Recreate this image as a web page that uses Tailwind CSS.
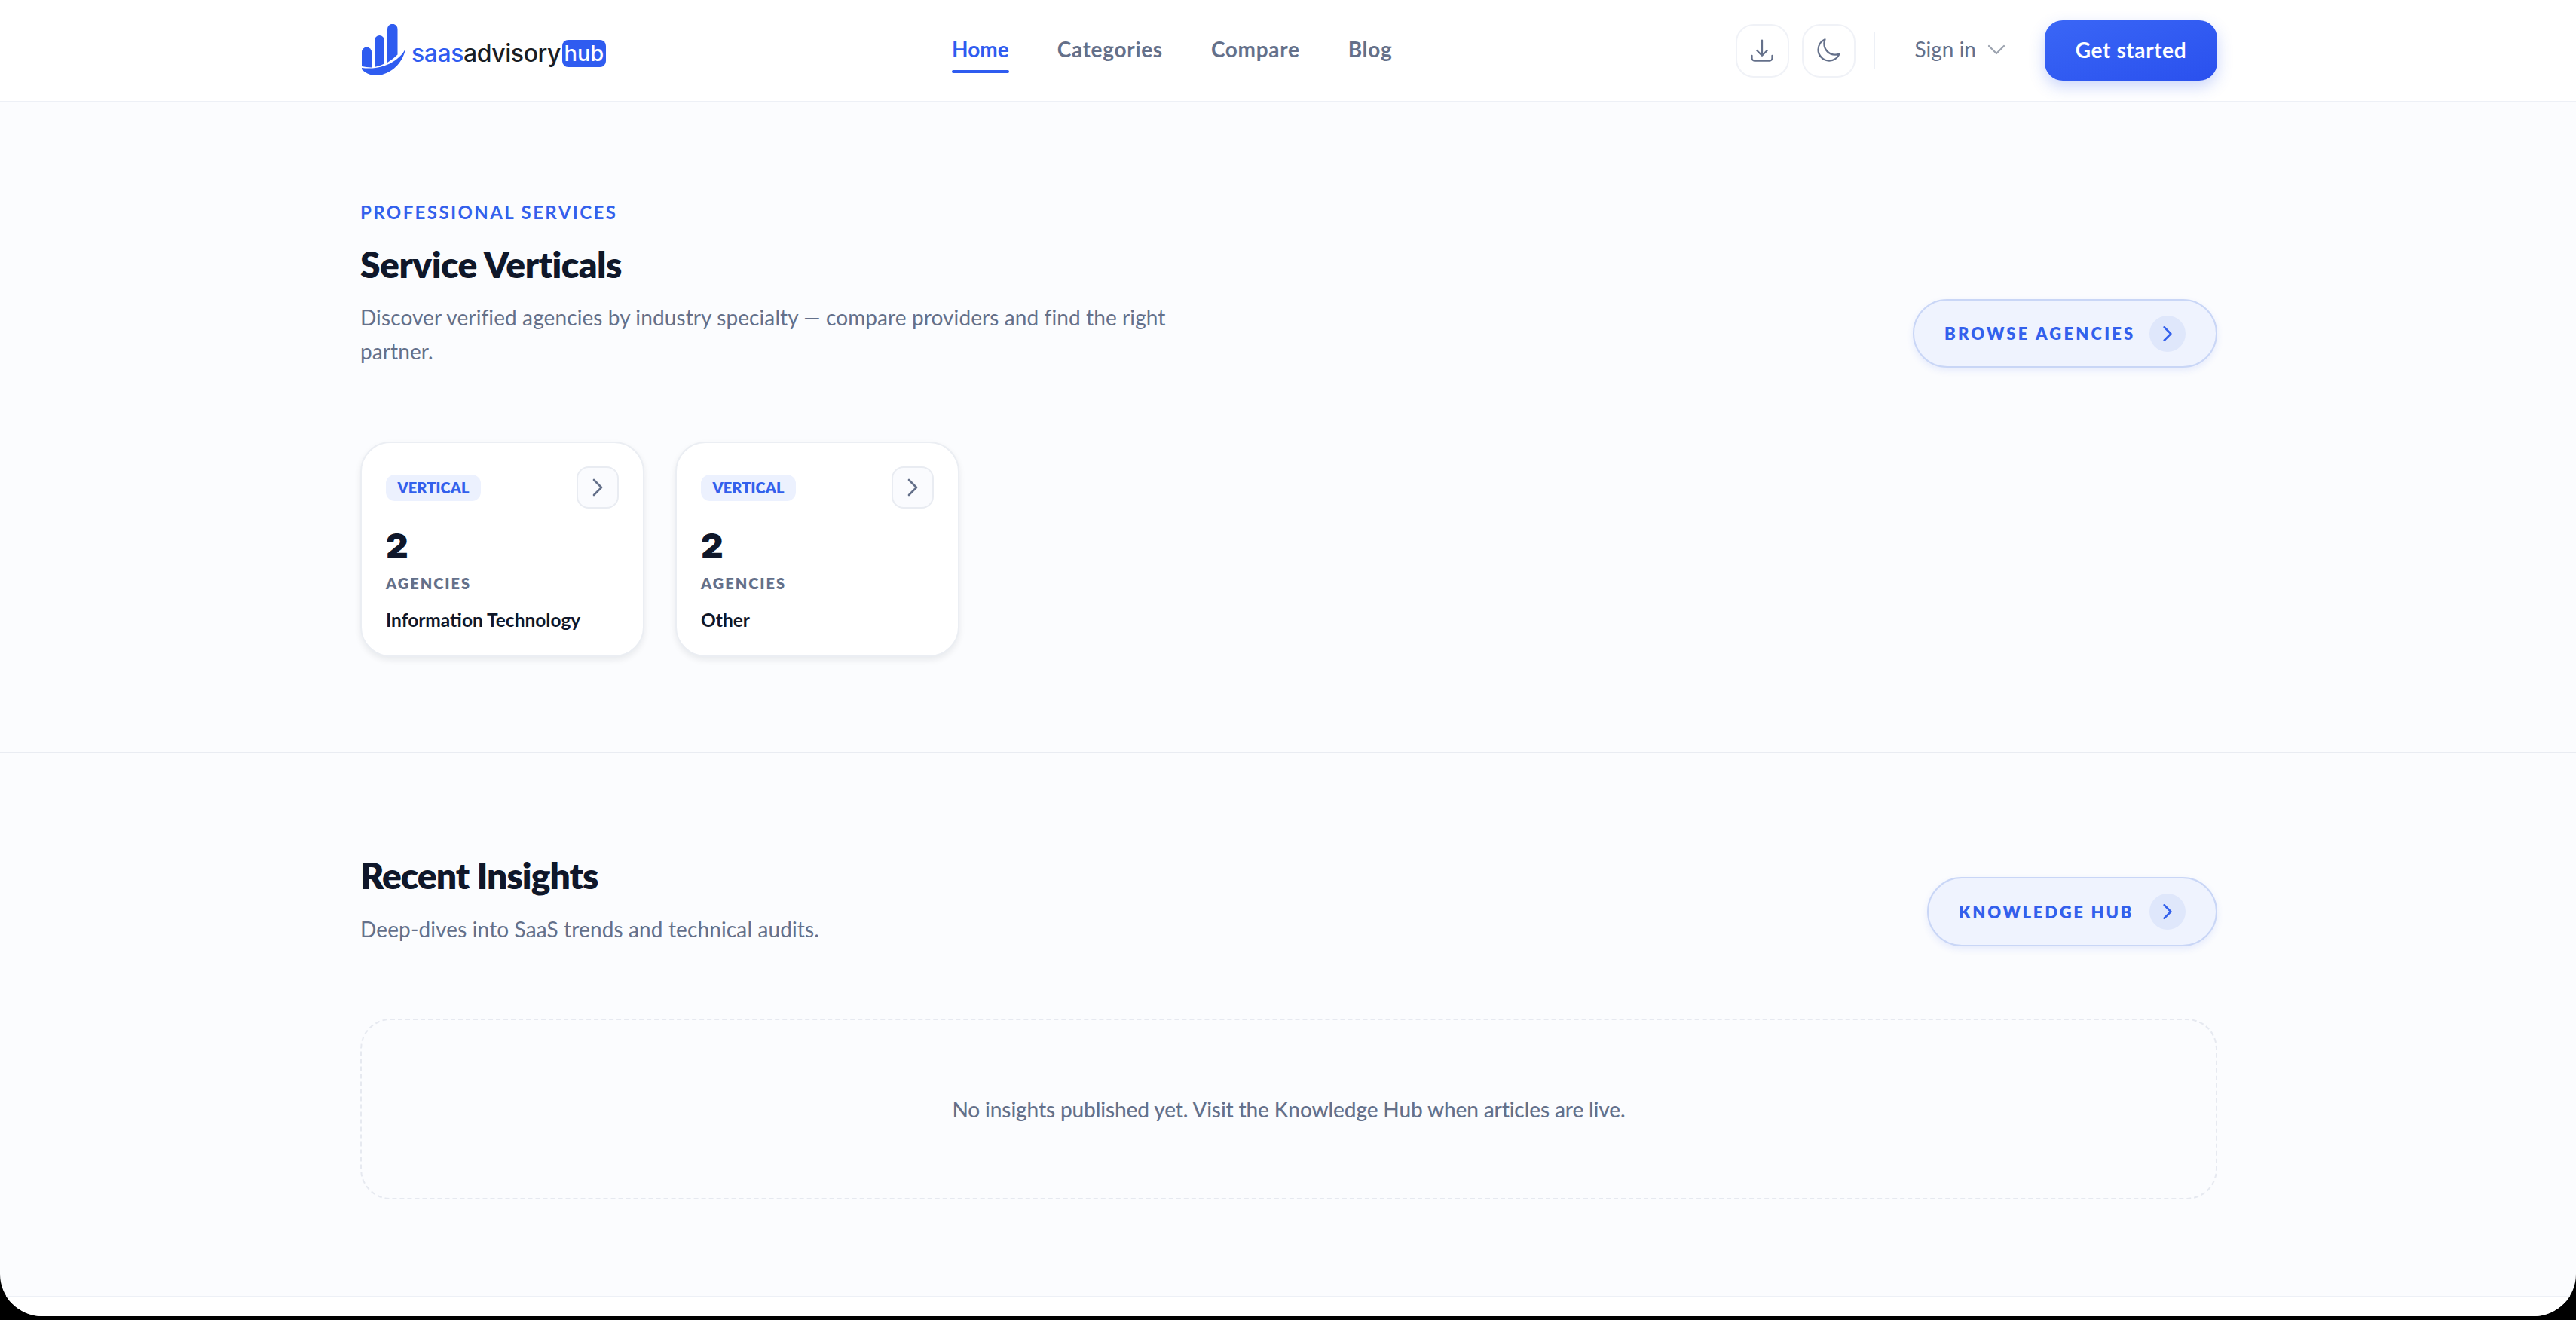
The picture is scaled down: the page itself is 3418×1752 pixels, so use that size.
<!DOCTYPE html>
<html lang="en">
<head>
  <meta charset="UTF-8" />
  <title>SaaS Advisory Hub</title>
  <script src="https://cdn.jsdelivr.net/npm/@tailwindcss/browser@4"></script>
</head>
<body class="bg-black font-['Lato',sans-serif] text-[#0f172a]">
  <div class="h-[1747px] overflow-hidden rounded-b-[56px] bg-[#fbfcfe]">

    <!-- Header -->
    <header class="h-[136px] border-b-2 border-[#edf0f6] bg-white">
      <div class="ml-[478px] flex h-[134px] w-[2464px] items-center justify-between">
        <a class="flex items-center pl-[2px]">
          <svg class="h-[68px] w-[58px] -translate-y-[1px]" viewBox="0 0 58 68" fill="#2f5cf0">
            <path d="M0 37a6.500 6.500 0 0 1 13 0v20.500q-7-.5-13-1.500Z"/>
            <path d="M17 21.500a6.500 6.500 0 0 1 13 0v31q-6 3-13 4.500Z"/>
            <path d="M34 6.500a6.500 6.500 0 0 1 13.500 0v34q-6 6-13.500 10.500Z"/>
            <path d="M0 58C22 61 47 53 58 33C54 54 36 68 18 68C10 68 4 64 0 60Z"/>
          </svg>
          <span class="mt-[7px] ml-[8px] font-['Inter',sans-serif] text-[32px] font-medium tracking-[-0.45px] text-[#1a1d24]"><span class="text-[#2f5cf0]">saas</span>advisory</span>
          <span class="mt-[7px] ml-[2px] flex h-[36px] w-[58px] items-center justify-center rounded-[8px] bg-[#2f5cf0] font-['Inter',sans-serif] text-[29px] font-medium text-white">hub</span>
        </a>

        <nav class="flex translate-x-[2px] -translate-y-[2px] items-center gap-[64px] text-[28px] font-bold tracking-[0.7px] text-[#64708a]">
          <a class="relative tracking-normal text-[#2f5cf0]">Home<span class="absolute -bottom-[11px] left-0 h-[4px] w-full rounded-full bg-[#2f5cf0]"></span></a>
          <a>Categories</a>
          <a>Compare</a>
          <a>Blog</a>
        </nav>

        <div class="flex items-center">
          <button class="flex h-[71px] w-[71px] items-center justify-center rounded-[24px] border-2 border-[#f0f2f7] bg-white text-[#64708a]">
            <svg class="h-[36px] w-[36px]" viewBox="0 0 24 24" fill="none" stroke="currentColor" stroke-width="1.500" stroke-linecap="round" stroke-linejoin="round"><path d="M3 16.500v2.250A2.250 2.250 0 0 0 5.250 21h13.500A2.250 2.250 0 0 0 21 18.750V16.500M16.500 12 12 16.500m0 0L7.500 12m4.500 4.500V3"/></svg>
          </button>
          <button class="ml-[17px] flex h-[71px] w-[71px] items-center justify-center rounded-[24px] border-2 border-[#f0f2f7] bg-white text-[#64708a]">
            <svg class="h-[36px] w-[36px]" viewBox="0 0 24 24" fill="none" stroke="currentColor" stroke-width="1.500" stroke-linecap="round" stroke-linejoin="round"><path d="M21.752 15.002A9.720 9.720 0 0 1 18 15.750c-5.385 0-9.750-4.365-9.750-9.750 0-1.330.266-2.597.748-3.752A9.753 9.753 0 0 0 3 11.250C3 16.635 7.365 21 12.750 21a9.753 9.753 0 0 0 9.002-5.998Z"/></svg>
          </button>
          <span class="ml-[24px] h-[48px] w-[2px] bg-[#edf0f6]"></span>
          <button class="ml-[53px] flex -translate-y-[2px] items-center text-[28px] text-[#64708a]">
            Sign in
            <svg class="ml-[11px] h-[32px] w-[32px] translate-y-[1px] text-[#9ca3af]" viewBox="0 0 24 24" fill="none" stroke="currentColor" stroke-width="1.700" stroke-linecap="round" stroke-linejoin="round"><path d="m19.500 8.250-7.500 7.500-7.500-7.500"/></svg>
          </button>
          <button class="ml-[48px] h-[80px] w-[229px] rounded-[24px] bg-gradient-to-br from-[#3a66f6] to-[#2a50ee] pb-[3px] text-[28px] font-bold tracking-[0.6px] text-white shadow-[0_8px_20px_rgba(47,92,240,0.25)]">Get started</button>
        </div>
      </div>
    </header>

    <!-- Service Verticals -->
    <section class="border-b-2 border-[#e9ecf2] pt-[128px] pb-[126px]">
      <div class="ml-[478px] w-[2464px]">
        <div class="flex items-end justify-between">
          <div>
            <p class="text-[24px] leading-[36px] font-bold tracking-[0.1em] text-[#3360ec]">PROFESSIONAL SERVICES</p>
            <h2 class="mt-[21px] text-[48px] leading-[60px] font-extrabold tracking-[-0.01em] text-[#0f172a]">Service Verticals</h2>
            <p class="mt-[18px] mb-[1px] w-[1152px] text-[28px] leading-[45px] tracking-[0.1px] text-[#64708a]">Discover verified agencies by industry specialty — compare providers and find the right<br />partner.</p>
          </div>
          <a class="mb-[2px] flex h-[91px] w-[404px] items-center justify-between rounded-full border-2 border-[#c9d6f6] bg-[#eff3fe] pr-[40px] pl-[40px] text-[22px] font-extrabold tracking-[0.145em] whitespace-nowrap text-[#3360ec] shadow-[0_4px_10px_rgba(47,92,240,0.1)]">
            BROWSE AGENCIES
            <span class="flex h-[48px] w-[48px] shrink-0 items-center justify-center rounded-full bg-[#dfe7fb]">
              <svg class="h-[28px] w-[28px]" viewBox="0 0 24 24" fill="none" stroke="currentColor" stroke-width="2.200" stroke-linecap="round" stroke-linejoin="round"><path d="m8.250 4.500 7.500 7.500-7.500 7.500"/></svg>
            </span>
          </a>
        </div>

        <div class="mt-[96px] flex gap-[41px]">
          <article class="h-[286px] w-[377px] rounded-[40px] border-2 border-[#ebeef3] bg-white px-[32px] pt-[31px] shadow-[0_4px_8px_rgba(15,23,42,0.08)]">
            <div class="flex items-center justify-between">
              <span class="flex h-[35px] w-[126px] items-center justify-center rounded-[12px] bg-[#ecf1fe] text-[20px] font-extrabold text-[#3360ec]">VERTICAL</span>
              <span class="flex h-[56px] w-[56px] items-center justify-center rounded-[16px] border-2 border-[#e9ecf2] bg-[#fafbfe] text-[#64708a]">
                <svg class="h-[32px] w-[32px]" viewBox="0 0 24 24" fill="none" stroke="currentColor" stroke-width="2" stroke-linecap="round" stroke-linejoin="round"><path d="m8.250 4.500 7.500 7.500-7.500 7.500"/></svg>
              </span>
            </div>
            <p class="mt-[19px] font-['Inter',sans-serif] text-[46px] leading-[60px] font-black text-[#0f172a]">2</p>
            <p class="mt-[6px] text-[20px] leading-[28px] font-extrabold tracking-[0.1em] text-[#64708a]">AGENCIES</p>
            <p class="mt-[19px] text-[24.500px] leading-[32px] font-bold text-[#0f172a]">Information Technology</p>
          </article>

          <article class="h-[286px] w-[377px] rounded-[40px] border-2 border-[#ebeef3] bg-white px-[32px] pt-[31px] shadow-[0_4px_8px_rgba(15,23,42,0.08)]">
            <div class="flex items-center justify-between">
              <span class="flex h-[35px] w-[126px] items-center justify-center rounded-[12px] bg-[#ecf1fe] text-[20px] font-extrabold text-[#3360ec]">VERTICAL</span>
              <span class="flex h-[56px] w-[56px] items-center justify-center rounded-[16px] border-2 border-[#e9ecf2] bg-[#fafbfe] text-[#64708a]">
                <svg class="h-[32px] w-[32px]" viewBox="0 0 24 24" fill="none" stroke="currentColor" stroke-width="2" stroke-linecap="round" stroke-linejoin="round"><path d="m8.250 4.500 7.500 7.500-7.500 7.500"/></svg>
              </span>
            </div>
            <p class="mt-[19px] font-['Inter',sans-serif] text-[46px] leading-[60px] font-black text-[#0f172a]">2</p>
            <p class="mt-[6px] text-[20px] leading-[28px] font-extrabold tracking-[0.1em] text-[#64708a]">AGENCIES</p>
            <p class="mt-[19px] text-[24.500px] leading-[32px] font-bold text-[#0f172a]">Other</p>
          </article>
        </div>
      </div>
    </section>

    <!-- Recent Insights -->
    <section class="pt-[132px]">
      <div class="ml-[478px] w-[2464px]">
        <div class="flex items-end justify-between">
          <div>
            <h2 class="text-[48px] leading-[60px] font-extrabold tracking-[-0.02em] text-[#0f172a]">Recent Insights</h2>
            <p class="mt-[19px] text-[28px] leading-[45px] tracking-[0.13px] text-[#64708a]">Deep-dives into SaaS trends and technical audits.</p>
          </div>
          <a class="flex h-[92px] w-[385px] items-center justify-between rounded-full border-2 border-[#c9d6f6] bg-[#eff3fe] pr-[40px] pl-[40px] text-[22px] font-extrabold tracking-[0.125em] whitespace-nowrap text-[#3360ec] shadow-[0_4px_10px_rgba(47,92,240,0.1)]">
            KNOWLEDGE HUB
            <span class="flex h-[48px] w-[48px] shrink-0 items-center justify-center rounded-full bg-[#dfe7fb]">
              <svg class="h-[28px] w-[28px]" viewBox="0 0 24 24" fill="none" stroke="currentColor" stroke-width="2.200" stroke-linecap="round" stroke-linejoin="round"><path d="m8.250 4.500 7.500 7.500-7.500 7.500"/></svg>
            </span>
          </a>
        </div>

        <div class="mt-[96px] flex h-[240px] items-center justify-center rounded-[40px] border-2 border-dashed border-[#e6e9f0] text-[28px] font-medium tracking-[-0.12px] text-[#64708a]">No insights published yet. Visit the Knowledge Hub when articles are live.</div>
      </div>
    </section>

    <footer class="mt-[128px] h-[40px] border-t-2 border-[#edf0f6] bg-white"></footer>
  </div>
</body>
</html>
